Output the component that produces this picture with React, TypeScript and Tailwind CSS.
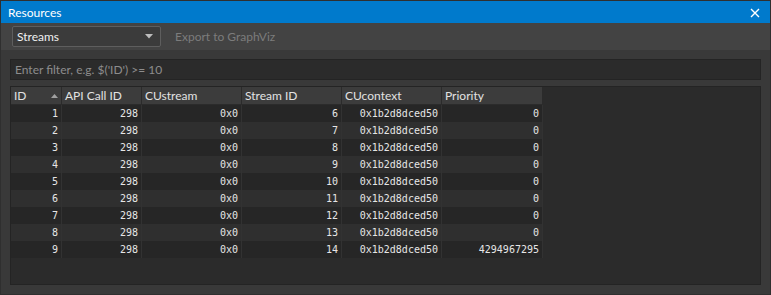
import React from 'react';

const ui = { fontFamily: 'Lato, "Open Sans", sans-serif' };
const mono = { fontFamily: '"DejaVu Sans Mono", "Liberation Mono", monospace' };

const columns = [
  { name: 'ID', w: 'w-[51px]' },
  { name: 'API Call ID', w: 'w-[80px]' },
  { name: 'CUstream', w: 'w-[100px]' },
  { name: 'Stream ID', w: 'w-[100px]' },
  { name: 'CUcontext', w: 'w-[100px]' },
  { name: 'Priority', w: 'w-[101px]' },
];

const rows = [1, 2, 3, 4, 5, 6, 7, 8, 9].map((i) => [
  String(i),
  '298',
  '0x0',
  String(i + 5),
  '0x1b2d8dced50',
  i === 9 ? '4294967295' : '0',
]);

const App = () => {
  return (
    <div className="w-[771px] h-[295px] flex flex-col bg-[#393939] border border-[#2f2f2f] text-[12px]" style={ui}>
      <div className="h-[22px] bg-[#007acc] flex items-center justify-between pl-[7px] pr-[10px] pt-px text-white">
        <span>Resources</span>
        <svg width="10" height="10" viewBox="0 0 10 10">
          <path d="M1 1 L9 9 M9 1 L1 9" stroke="white" strokeWidth="1.4" />
        </svg>
      </div>
      <div className="h-[27px] bg-[#434343] flex items-center pl-[11px] gap-[14px]">
        <div className="w-[149px] h-[21px] rounded-[2px] border border-[#5e5e5e] bg-[#3b3b3b] flex items-center justify-between pl-[4px] pr-[7px] text-[#f0f0f0]">
          <span>Streams</span>
          <svg width="8" height="5" viewBox="0 0 8 5">
            <path d="M0 0 H8 L4 4.5 Z" fill="#bdbdbd" />
          </svg>
        </div>
        <span className="text-[#7c7c7c]">Export to GraphViz</span>
      </div>
      <div className="flex-1 flex flex-col px-[9px] pt-[9px] pb-[9px] gap-[6px]">
        <div className="h-[21px] bg-[#2b2b2b] border border-[#242424] flex items-center pl-[4px] text-[#8d8d8d]">
          Enter filter, e.g. $('ID') &gt;= 10
        </div>
        <div className="flex-1 bg-[#2b2b2b] border border-[#242424] flex flex-col">
          <div className="flex h-[18px]">
            {columns.map((c, i) => (
              <div
                key={c.name}
                className={`${c.w} bg-[#3c3c3c] border-r border-b border-[#2b2b2b] flex items-center justify-between pl-[3px] pr-[3px] text-[#e2e2e2]`}
              >
                <span>{c.name}</span>
                {i === 0 && (
                  <svg width="7" height="4" viewBox="0 0 7 4">
                    <path d="M0 4 H7 L3.5 0 Z" fill="#a0a0a0" />
                  </svg>
                )}
              </div>
            ))}
          </div>
          {rows.map((r, ri) => (
            <div key={ri} className={`flex h-[17px] ${ri % 2 === 0 ? 'bg-[#262626]' : 'bg-[#2f2f2f]'} w-fit`}>
              {r.map((v, ci) => (
                <div
                  key={ci}
                  className={`${columns[ci].w} border-r border-[#323232] flex items-center justify-end pr-[3px] text-[10px] text-[#e6e6e6]`}
                  style={mono}
                >
                  {v}
                </div>
              ))}
            </div>
          ))}
        </div>
      </div>
    </div>
  );
};

export default App;
